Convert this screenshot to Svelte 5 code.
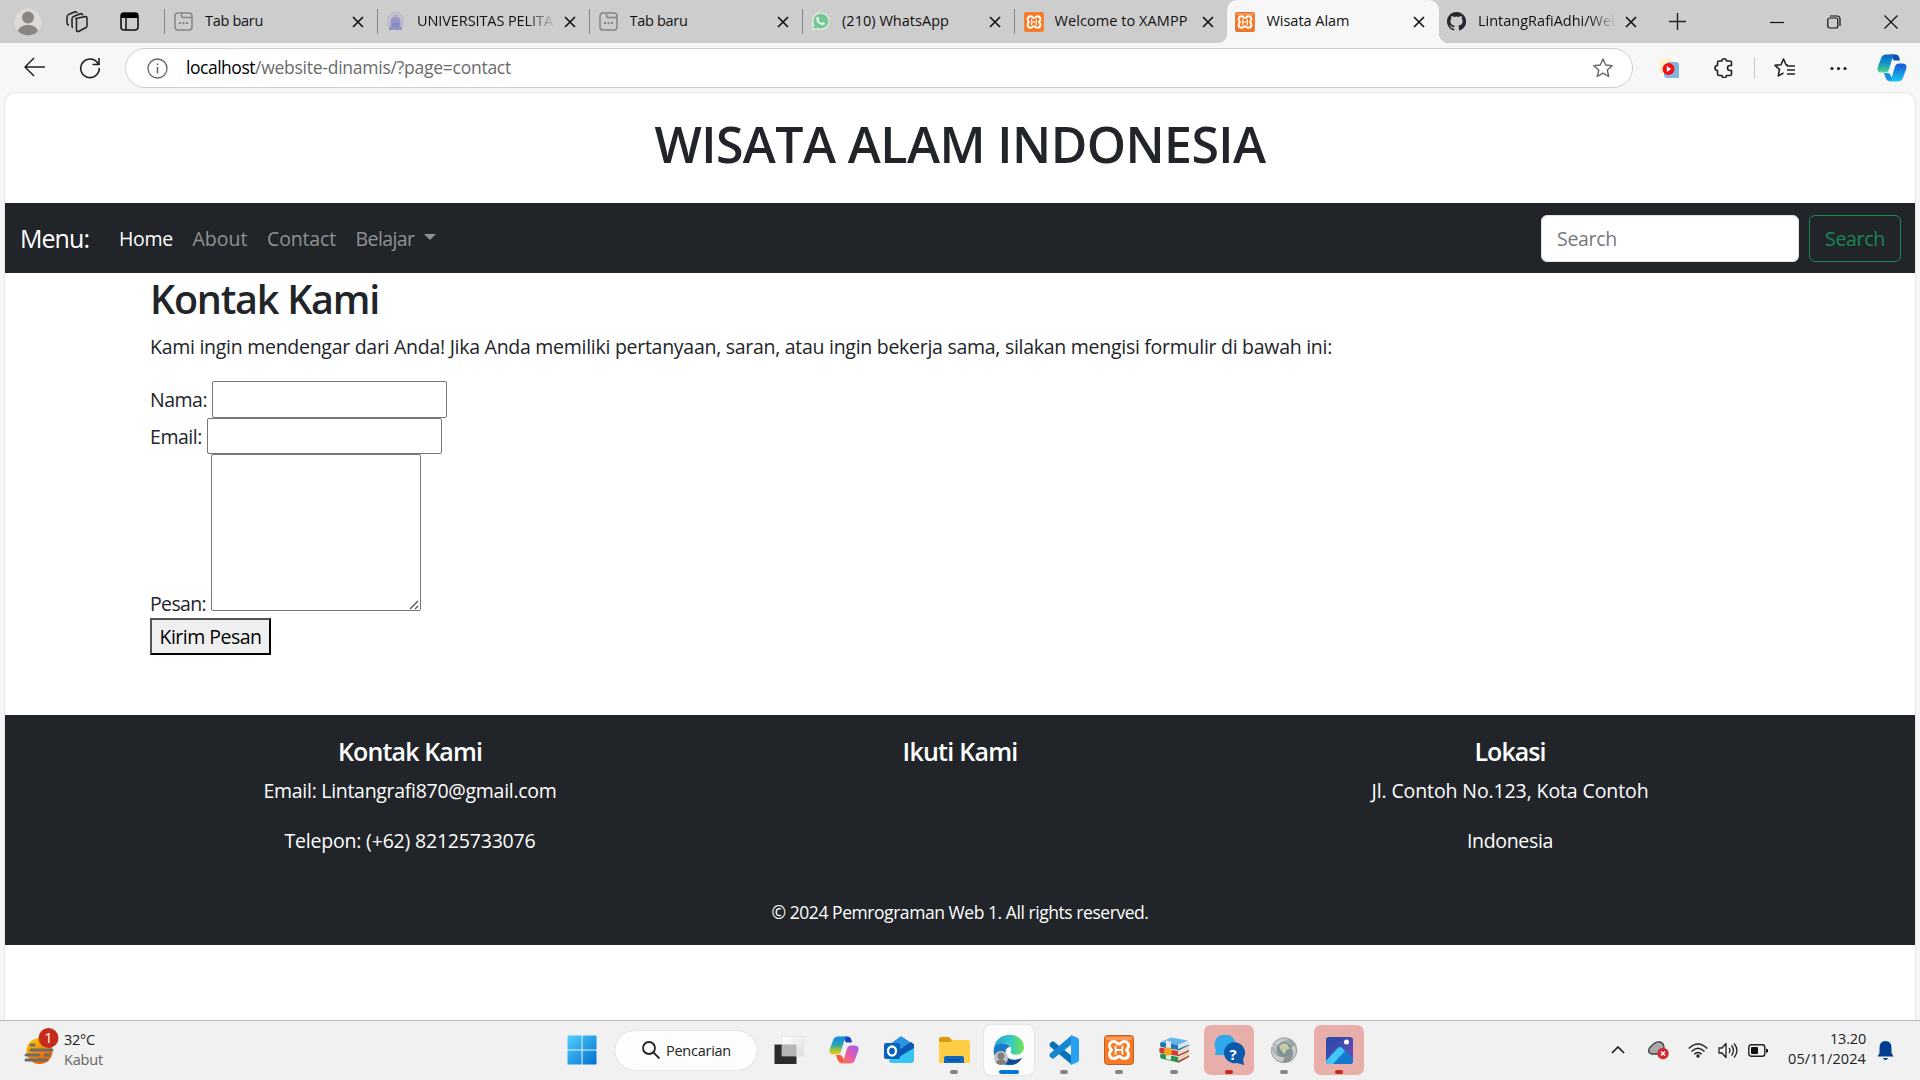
<script>
  // Adjusts letter spacing so that a label occupies the given width.
  function fit(node, width) {
    const natural = node.getBoundingClientRect().width;
    const count = node.textContent.length;
    node.style.letterSpacing = `${(width - natural) / count}px`;
  }

  const tabs = [
    { icon: 'new', title: 'Tab baru', width: 58 },
    { icon: 'uni', title: 'UNIVERSITAS PELITA', width: 136, fade: true },
    { icon: 'new', title: 'Tab baru', width: 58 },
    { icon: 'wa', title: '(210) WhatsApp', width: 107 },
    { icon: 'xampp', title: 'Welcome to XAMPP', width: 133 },
    { icon: 'xampp2', title: 'Wisata Alam', width: 83, active: true },
    { icon: 'github', title: 'LintangRafiAdhi/Web', width: 142, fade: true }
  ];

  const apps = [
    { icon: 'folder', run: 'idle' },
    { icon: 'edge', run: 'current' },
    { icon: 'code', run: 'idle' },
    { icon: 'xampp', run: 'idle' },
    { icon: 'books', run: 'idle' },
    { icon: 'help', run: 'alert' },
    { icon: 'globe', run: 'idle' },
    { icon: 'photos', run: 'alert' }
  ];
</script>

{#snippet xampp(size, bevel)}
  <svg width={size} height={size} viewBox="0 0 30 30">
    <rect x=".5" y=".5" width="29" height="29" rx="3" fill="#f97822" stroke={bevel ? '#b9612a' : '#f97822'} />
    {#if bevel}<path d="M2 2h26v3H2z" fill="#ffb37d" opacity=".6" />{/if}
    <path d="M10 6.500C6.500 6.500 5 9 5.500 11.500C5.800 13 6.800 14 7.500 15C6.500 16 5.500 17.200 5.500 19C5.500 22 7.500 23.500 10 23.500C12.500 23.500 13 21.500 15 21.500C17 21.500 17.500 23.500 20 23.500C22.500 23.500 24.500 22 24.500 19C24.500 17.200 23.500 16 22.500 15C23.200 14 24.200 13 24.500 11.500C25 9 23.500 6.500 20 6.500C17.500 6.500 17 9 15 9C13 9 12.500 6.500 10 6.500Z" fill="none" stroke="#fff" stroke-width="3" stroke-linejoin="round" />
    <path d="M11.500 11.500v2q0 1.500 1.500 1.500h4q1.500 0 1.500-1.500v-2M11.500 19v-2.500Q11.500 15 13 15M18.500 19v-2.500Q18.500 15 17 15" fill="none" stroke="#fff" stroke-width="1.800" stroke-linecap="round" />
  </svg>
{/snippet}

{#snippet closeIcon()}
  <svg class="close" width="12" height="12" viewBox="0 0 12 12"><path d="M1 1l10 10M11 1L1 11" stroke="#111" stroke-width="1.600" /></svg>
{/snippet}

<div class="screen">
  <header class="tabstrip">
    <div class="tools">
      <svg width="28" height="28" viewBox="0 0 28 28"><circle cx="14" cy="14" r="13.500" fill="#dcdad7" /><circle cx="14" cy="9.500" r="6" fill="#8a8683" /><path d="M4 23c2-8 18-8 20 0a13.500 13.500 0 0 1-20 0z" fill="#8a8683" /></svg>
      <svg width="22" height="22" viewBox="0 0 22 22" fill="none" stroke="#222" stroke-width="1.500" stroke-linejoin="round"><path d="M10 7.500l9.500-2q1.500 0 1.500 1.500v8q0 1-1 1.500l-7.500 4q-2 .5-2-1.500V9.500z" /><path d="M7 16.500q-1 0-1-2V8q0-2 1.500-2.500L15 2.500q1.500 0 1.500 2M3 14q-2 0-2-2V6q0-1.500 1.500-2.500L9 .8q2-.3 2 1.500" /></svg>
      <svg width="19" height="19" viewBox="0 0 19 19"><rect x="1" y="1" width="17" height="17" rx="3" fill="none" stroke="#111" stroke-width="1.600" /><path d="M1 6V3q0-2 2-2h13q2 0 2 2v3z" fill="#000" /><path d="M6 6v12" stroke="#111" stroke-width="1.500" /></svg>
    </div>
    <div class="tabs">
      {#each tabs as tab}
        <div class="tab" class:active={tab.active}>
          <span class="favicon">
            {#if tab.icon === 'new'}
              <svg width="19" height="19" viewBox="0 0 19 19" fill="none" stroke="#858585" stroke-width="1.500"><rect x="1" y="1" width="17" height="17" rx="3" /><path d="M7.500 1v3q0 1.500 1.500 1.500h9" /><path d="M5 11h2M8.500 11h2M12 11h2" stroke-width="2" /></svg>
            {:else if tab.icon === 'uni'}
              <svg width="19" height="19" viewBox="0 0 19 19"><path d="M2 9a7.500 8.500 0 0 1 15 0v5H2z" fill="#c3c4d4" stroke="#b3b5cc" /><path d="M9.500 4.500q4.500 0 5 5V15h1.500v3H3v-3h1.500V9.500q.5-5 5-5z" fill="#9496c6" /><path d="M7 15v-4M9.500 15v-5M12 15v-4" stroke="#7274b4" /><path d="M7 3.500h5M7 6.500l2.500-2 2.500 2" stroke="#dc9ba1" fill="none" /></svg>
            {:else if tab.icon === 'wa'}
              <svg width="19" height="19" viewBox="0 0 19 19"><path d="M.5 18.500l1.500-5a8.800 8.800 0 1 1 3.500 3.500z" fill="#e3eee6" /><path d="M2.300 16.700l1-4a7.500 7.500 0 1 1 3 3z" fill="#74c891" /><path d="M5.800 5.200q1-1 1.700.2l.7 1.500-.8 1.300q1 2.200 3.200 3l1.300-1.300 1.900 1q.5 2-1.800 2.300Q6.500 12.500 5.300 7.500q0-1.500.5-2.300z" fill="#eef6f0" /></svg>
            {:else if tab.icon === 'github'}
              <svg width="19" height="19" viewBox="0 0 16 16" fill="#24292f"><path d="M8 0C3.580 0 0 3.580 0 8c0 3.540 2.290 6.530 5.470 7.590.4.070.55-.17.55-.38v-1.340c-2.220.48-2.690-1.070-2.690-1.070-.36-.92-.89-1.170-.89-1.170-.73-.5.05-.49.05-.49.8.06 1.230.82 1.230.82.71 1.220 1.870.87 2.330.67.070-.52.280-.87.510-1.070-1.780-.2-3.640-.89-3.640-3.950 0-.87.310-1.590.82-2.150-.08-.2-.36-1.020.08-2.120 0 0 .67-.21 2.200.82a7.600 7.600 0 0 1 4 0c1.530-1.040 2.200-.82 2.200-.82.44 1.100.16 1.920.08 2.120.51.560.82 1.270.82 2.150 0 3.070-1.870 3.750-3.650 3.950.29.250.54.730.54 1.480v2.190c0 .21.150.46.55.38A8 8 0 0 0 8 0z" /></svg>
            {:else}
              {@render xampp(20, tab.active)}
            {/if}
          </span>
          <span class="title" class:fade={tab.fade}><span class="t" use:fit={tab.width}>{tab.title}</span></span>
          {@render closeIcon()}
        </div>
      {/each}
    </div>
    <svg class="plus" width="17" height="17" viewBox="0 0 17 17"><path d="M8.500 0v17M0 8.500h17" stroke="#222" stroke-width="1.400" /></svg>
    <div class="winctl">
      <svg width="14" height="14" viewBox="0 0 14 14"><path d="M0 7.500h14" stroke="#111" stroke-width="1.200" /></svg>
      <svg width="14" height="14" viewBox="0 0 14 14" fill="none" stroke="#111" stroke-width="1.200"><rect x=".8" y="3" width="10" height="10" rx="2" /><path d="M3 1h7q3 0 3 3v7" /></svg>
      <svg width="14" height="14" viewBox="0 0 14 14"><path d="M.5.5l13 13M13.500.5l-13 13" stroke="#111" stroke-width="1.200" /></svg>
    </div>
  </header>

  <div class="toolbar">
    <svg class="back" width="21" height="20" viewBox="0 0 21 20" fill="none" stroke="#222" stroke-width="1.500"><path d="M21 10H1M10 1l-9 9 9 9" /></svg>
    <svg class="reload" width="22" height="22" viewBox="0 0 22 22" fill="none" stroke="#222" stroke-width="1.600"><path d="M19.500 7.500A9.300 9.300 0 1 0 20.300 11M20 1v6.500h-6.500" /></svg>
    <div class="address">
      <svg width="21" height="21" viewBox="0 0 21 21" fill="none" stroke="#666" stroke-width="1.300"><circle cx="10.500" cy="10.500" r="9.500" /><path d="M10.500 9v6.500M10.500 5.500v1.700" stroke-width="1.600" /></svg>
      <span class="url"><span class="t host" use:fit={69}>localhost</span><span class="t" use:fit={256}>/website-dinamis/?page=contact</span></span>
      <svg class="star" width="20" height="20" viewBox="0 0 20 20" fill="none" stroke="#666" stroke-width="1.400" stroke-linejoin="round"><path d="M10 1l2.700 6 6.500.7-4.900 4.300 1.400 6.500L10 15.200l-5.700 3.300L5.700 12 .8 7.700l6.500-.7z" /></svg>
    </div>
    <div class="actions">
      <svg width="20" height="20" viewBox="0 0 20 20"><path d="M0 0h20v20H0z" fill="#fff" /><path d="M0 0h11q3 0 3 3v4H6v9H3q-3 0-3-3z" fill="#fff1ce" /><path d="M9 4h8q3 0 3 3v13H8q-3 0-3-3V8z" fill="#83b5dc" /><circle cx="9.500" cy="11" r="6" fill="#f50f18" /><path d="M7.800 8l4.500 3-4.500 3z" fill="#fff" /></svg>
      <svg width="20" height="20" viewBox="0 0 20 20" fill="none" stroke="#222" stroke-width="1.600" stroke-linejoin="round"><path d="M5 3h3a2.200 2.200 0 0 1 4.400 0H16q1.500 0 1.500 1.500V7.500H16a2.500 2.500 0 0 0 0 5h1.500V16q0 1.500-1.500 1.500h-3.600a2.200 2.200 0 0 1-4.400 0H5q-1.500 0-1.500-1.500v-3.500a2.500 2.500 0 0 1 0-5V4.500Q3.500 3 5 3z" /></svg>
      <i></i>
      <svg width="21" height="20" viewBox="0 0 21 20" fill="none" stroke="#222" stroke-width="1.600" stroke-linejoin="round"><path d="M14 7l-2-.3L9.500 1 7 6.700l-6 .7 4.500 4-1.200 6.500L9.500 15M12.500 8H21M13 12h8M13 16h8" /></svg>
      <svg width="17" height="5" viewBox="0 0 17 5" fill="#222"><circle cx="2" cy="2.500" r="1.600" /><circle cx="8.500" cy="2.500" r="1.600" /><circle cx="15" cy="2.500" r="1.600" /></svg>
      <svg width="30" height="28" viewBox="0 0 30 28"><defs><linearGradient id="cpa" x2="0" y2="1"><stop stop-color="#0967cc" /><stop offset=".5" stop-color="#1296c8" /><stop offset="1" stop-color="#55d783" /></linearGradient><linearGradient id="cpb" x2="0" y2="1"><stop stop-color="#1756d1" /><stop offset="1" stop-color="#18c8f5" /></linearGradient></defs><path d="M13 .500h6q3 0 4 6h-6z" fill="#0a4fb0" /><path d="M9.500 .500H18q-2 1-3 5l-3 10q-1 3-4 3H5q-6 0-4-6l3-8q1-4 5.500-4z" fill="url(#cpa)" /><path d="M20.500 27.500H12q2-1 3-5l3-10q1-3 4-3h3q6 0 4 6l-3 8q-1 4-5.500 4z" fill="url(#cpb)" /><path d="M7 19h4q2 0 3 3l1 3q-1 2-3 2-3 0-5-8z" fill="#1593e6" /></svg>
    </div>
  </div>

  <main class="page">
    <h1><span class="t" use:fit={611}>WISATA ALAM INDONESIA</span></h1>
    <nav>
      <span class="brand t" use:fit={69}>Menu:</span>
      <div class="links">
        <span class="t on" use:fit={54}>Home</span>
        <span class="t" use:fit={55}>About</span>
        <span class="t" use:fit={69}>Contact</span>
        <span class="drop"><span class="t" use:fit={59}>Belajar</span><b></b></span>
      </div>
      <div class="search">
        <div class="field"><span class="t" use:fit={60}>Search</span></div>
        <div class="go"><span class="t" use:fit={60}>Search</span></div>
      </div>
    </nav>

    <section class="contact">
      <h2><span class="t" use:fit={229}>Kontak Kami</span></h2>
      <p><span class="t" use:fit={1182}>Kami ingin mendengar dari Anda! Jika Anda memiliki pertanyaan, saran, atau ingin bekerja sama, silakan mengisi formulir di bawah ini:</span></p>
      <div class="row"><span class="t" use:fit={57}>Nama:</span><input type="text" aria-label="Nama" /></div>
      <div class="row"><span class="t" use:fit={52}>Email:</span><input type="text" aria-label="Email" /></div>
      <div class="row area">
        <span class="t" use:fit={56}>Pesan:</span>
        <div class="box">
          <textarea aria-label="Pesan"></textarea>
          <svg class="grip" width="10" height="10" viewBox="0 0 10 10"><path d="M1 9l8-8M6 9l3-3" stroke="#555" stroke-width="1.300" /></svg>
        </div>
      </div>
      <button><span class="t" use:fit={102}>Kirim Pesan</span></button>
    </section>

    <footer>
      <div class="cols">
        <div>
          <h5><span class="t" use:fit={144}>Kontak Kami</span></h5>
          <p><span class="t" use:fit={293}>Email: Lintangrafi870@gmail.com</span></p>
          <p><span class="t" use:fit={251}>Telepon: (+62) 82125733076</span></p>
        </div>
        <div>
          <h5><span class="t" use:fit={115}>Ikuti Kami</span></h5>
        </div>
        <div>
          <h5><span class="t" use:fit={71}>Lokasi</span></h5>
          <p><span class="t" use:fit={277}>Jl. Contoh No.123, Kota Contoh</span></p>
          <p><span class="t" use:fit={86}>Indonesia</span></p>
        </div>
      </div>
      <small><span class="t" use:fit={377}>© 2024 Pemrograman Web 1. All rights reserved.</span></small>
    </footer>
  </main>

  <div class="taskbar">
    <div class="weather">
      <svg width="36" height="38" viewBox="0 0 36 38"><defs><linearGradient id="sun" x2=".6" y2="1"><stop stop-color="#fdd106" /><stop offset="1" stop-color="#ea5a04" /></linearGradient></defs><circle cx="15.500" cy="23" r="13" fill="url(#sun)" /><path d="M7 17h3M7 22h21M2 27h13M21 27h4M2 32h21" stroke="#6d6c6b" stroke-width="3" stroke-linecap="round" /><circle cx="24.500" cy="10" r="10" fill="#c42b1c" /><text x="24.500" y="15" text-anchor="middle" font-size="14" fill="#fff">1</text></svg>
      <div class="wtext"><span class="t" use:fit={31}>32°C</span><span class="t dim" use:fit={39}>Kabut</span></div>
    </div>
    <div class="dock">
      <svg class="win" width="30" height="30" viewBox="0 0 30 30"><defs><linearGradient id="wg" x2="1" y2="1"><stop stop-color="#4fd0ff" /><stop offset="1" stop-color="#0070d1" /></linearGradient></defs><path d="M1 .5h13.500v14H.5V1zM15.500.5H29l.5.5v13.500h-14zM.5 15.500h14v14H1l-.5-.5zM15.500 15.500h14V29l-.5.5H15.500z" fill="url(#wg)" /></svg>
      <div class="find">
        <svg width="18" height="18" viewBox="0 0 18 18" fill="none" stroke="#222" stroke-width="1.800"><circle cx="7" cy="7" r="6" /><path d="M11.500 11.500l6 6" /></svg>
        <span class="t" use:fit={65}>Pencarian</span>
      </div>
      <div class="slot">
        <svg width="30" height="30" viewBox="0 0 30 30"><defs><linearGradient id="tv" x2="1" y2="1"><stop stop-color="#fff" /><stop offset="1" stop-color="#dedede" /></linearGradient></defs><path d="M.5 9.500h22v19.500H.5z" fill="#2b2b29" /><path d="M8 1.500h22v19.500H8z" fill="url(#tv)" stroke="#ddd" stroke-width=".6" /><path d="M8 9.500h14.500v11.500H8z" fill="#b5b5b5" /></svg>
      </div>
      <div class="slot">
        <svg width="30" height="28" viewBox="0 0 30 28"><defs><linearGradient id="ca" x2="0" y2="1"><stop stop-color="#1487e5" /><stop offset=".45" stop-color="#21a5b5" /><stop offset=".75" stop-color="#9fc83a" /><stop offset="1" stop-color="#f6c31b" /></linearGradient><linearGradient id="cb" x1="1" x2="0" y2="1"><stop stop-color="#9b5cf0" /><stop offset=".5" stop-color="#e55bb0" /><stop offset="1" stop-color="#ff7b3d" /></linearGradient></defs><path d="M14 .5h5q3 0 4 6h-6z" fill="#1846c4" /><path d="M9.500.5H18q-2 1-3 5l-3 10q-1 3-4 3H5q-6 0-4-6l3-8q1-4 5.500-4z" fill="url(#ca)" /><path d="M20.500 27.500H12q2-1 3-5l3-10q1-3 4-3h3q6 0 4 6l-3 8q-1 4-5.500 4z" fill="url(#cb)" /><path d="M7 19h4q2 0 3 3l1 3q-1 2-3 2-3 0-5-8z" fill="#f35b3f" /></svg>
      </div>
      <div class="slot">
        <svg width="31" height="28" viewBox="0 0 31 28"><path d="M5 9L16 1q1-.8 2 0l12 8v4l-13 8-12-7z" fill="#1267bd" /><path d="M7 8l9-7q1-.8 2 0l9 6-12 8z" fill="#2992e2" /><path d="M14 17l16-8v15q0 3-3 3H8q-3 0-3-3z" fill="#36c5f3" /><path d="M15 14l12-8 3 2.500V12l-15 9z" fill="#0a59ae" /><rect x="0" y="7" width="16" height="16" rx="2" fill="#0764bd" /><ellipse cx="8" cy="15" rx="4" ry="4.500" fill="none" stroke="#fff" stroke-width="2.300" /></svg>
      </div>
      {#each apps as app}
        <div class="slot {app.run}">
          {#if app.icon === 'folder'}
            <svg width="31" height="28" viewBox="0 0 31 28"><path d="M0 3q0-2 2-2h8l3 3v4H0z" fill="#dd9a0b" /><path d="M0 6h11l3-2h15q2 0 2 2v20q0 1-1 1H1q-1 0-1-1z" fill="#ffce45" /><path d="M5 27v-5q0-2 2-2h16q2 0 2 2v5z" fill="#0f68bc" /><path d="M9 24h12" stroke="#063e87" /></svg>
          {:else if app.icon === 'edge'}
            <svg width="32" height="32" viewBox="0 0 32 32"><defs><linearGradient id="ea" x2="1"><stop stop-color="#22a4dd" /><stop offset=".55" stop-color="#37c7c5" /><stop offset="1" stop-color="#74e64b" /></linearGradient></defs><path d="M1 15C2-3 30-4 31 13c0 7-7 9-12 7-3-2 0-3-1-6C16 8 6 7 1 15z" fill="url(#ea)" /><path d="M1 14c4-6 13-6 16-1-6 0-6 9 0 12 4 2 9 1 12-1-5 9-18 9-24 3-4-4-5-9-4-13z" fill="#187ac8" /><path d="M12 17c-2 6 4 12 17 7-4 6-9 8-15 6-6-3-7-10-2-13z" fill="#114b93" /><circle cx="8" cy="24" r="7" fill="#c4c4c4" /><circle cx="8" cy="22" r="3.500" fill="#817d7a" /><path d="M3 29c1-5 9-5 10 0q-5 4-10 0z" fill="#817d7a" /></svg>
          {:else if app.icon === 'code'}
            <svg width="30" height="30" viewBox="0 0 30 30"><path d="M1 8l3-2 19 15v9L1 11.500Q0 9.500 1 8z" fill="#0a70b8" /><path d="M1 22l3 2L23 9V0L1 18.500Q0 20.500 1 22z" fill="#1688d3" /><path d="M22 0l6.500 2.800Q30 3.500 30 5v20q0 1.500-1.500 2.200L22 30z" fill="#29a1f0" /></svg>
          {:else if app.icon === 'xampp'}
            {@render xampp(30, true)}
          {:else if app.icon === 'books'}
            <svg width="31" height="26" viewBox="0 0 31 26"><path d="M2 5L12 .500l17 3L19 8z" fill="#62b6ed" /><path d="M2 5l17 3v5L2 10q-2-2.500 0-5z" fill="#2375b5" /><path d="M19 8l10.500-4.500v4L19 13z" fill="#d9e6ee" /><path d="M19 12l11-4.500v1L19 14z" fill="#2375b5" /><path d="M1 10.500l18 3.500v5L1 16q-1.500-3 0-5.500z" fill="#d53a35" /><path d="M19 14l11-5v4.500L19 19z" fill="#f0dbc5" /><path d="M2 16.500l17 3.500v5.500L2 21.500q-2-2.500 0-5z" fill="#26964a" /><path d="M19 20l11-5.500v4.500l-11 6z" fill="#ead5bb" /><path d="M19 24l11-5.500v1.500l-11 6zM19 18l11-5v1.500l-11 5z" fill="#9c4538" /><path d="M7 3.500l5 1V23l-5-1z" fill="#e9e8f0" /><circle cx="9" cy="14.500" r="4" fill="#f5a51a" /></svg>
          {:else if app.icon === 'help'}
            <svg width="31" height="31" viewBox="0 0 31 31"><path d="M1 20l1-5A10.500 10.500 0 1 1 9 20z" fill="#2fa9e9" /><path d="M30 30l-1-6a10.500 10.500 0 1 0-6 4z" fill="#0d59ab" /><text x="19" y="24.500" text-anchor="middle" font-size="15" font-weight="700" fill="#fff">?</text></svg>
          {:else if app.icon === 'globe'}
            <svg width="28" height="28" viewBox="0 0 28 28"><defs><linearGradient id="gl" x2="1" y2="1"><stop stop-color="#e3e5e5" /><stop offset=".5" stop-color="#a4a8a9" /><stop offset="1" stop-color="#777c7d" /></linearGradient></defs><circle cx="14" cy="14" r="13" fill="url(#gl)" /><circle cx="14" cy="13.500" r="7.500" fill="#7d9296" /><path d="M9 10q4-4 8-2l3 5-4 1-1 4q-4-2-6-8z" fill="#c9caa9" /><path d="M3 8Q12-2 22 5.500 13 3 8 9.500 5 9 3 8zM25 8q5 13-7 18 8-7 3-14 2-3 4-4zM12 26.500Q-1 23 2 11q2 10 13 10-1 4-3 5.500z" fill="#c9cccc" stroke="#8b8f90" stroke-width=".6" /></svg>
          {:else}
            <svg width="27" height="27" viewBox="0 0 27 27"><defs><linearGradient id="ph" x2="1" y2="1"><stop stop-color="#214ca9" /><stop offset="1" stop-color="#7447b6" /></linearGradient><clipPath id="pc"><rect width="27" height="27" rx="3" /></clipPath></defs><g clip-path="url(#pc)"><path d="M0 0h27v27H0z" fill="url(#ph)" /><path d="M0 23l11-12q3-3 6 0l10 10v6H0z" fill="#1678cf" /><path d="M0 24l12-13q2-2 4 0l3 3L7 27H0z" fill="#42c6f4" /></g><circle cx="20.500" cy="5" r="2.500" fill="#fff" /></svg>
          {/if}
          <em></em>
        </div>
      {/each}
    </div>
    <div class="tray">
      <svg class="chev" width="14" height="8" viewBox="0 0 14 8" fill="none" stroke="#222" stroke-width="1.700"><path d="M1 7l6-6 6 6" /></svg>
      <svg class="cloud" width="21" height="19" viewBox="0 0 21 19"><path d="M4 13Q-1 12 1.500 7C4 5 6 0 12 1q4 1 4 6v6z" fill="#aaa" stroke="#444" stroke-width="1.400" /><circle cx="15" cy="12.500" r="5.700" fill="#dc2430" /><path d="M13 10.500l4 4m0-4l-4 4" stroke="#fff" stroke-width="1.500" /></svg>
      <svg class="wifi" width="20" height="15" viewBox="0 0 20 15" fill="none" stroke="#222" stroke-width="1.400"><path d="M.7 5.500q9.300-9 18.600 0M3.500 8.500q6.500-6.500 13 0M6.300 11.300q3.700-3.700 7.400 0" /><circle cx="10" cy="13" r="1" fill="#222" /></svg>
      <svg class="vol" width="20" height="17" viewBox="0 0 20 17" fill="none" stroke="#222" stroke-width="1.300" stroke-linejoin="round"><path d="M1 6h3l4-4.500v14L4 11H1zM11 6q2 2.500 0 5M13.500 3.500q4 5 0 10M16 1.500q6 7 0 14" /></svg>
      <svg class="bat" width="20" height="13" viewBox="0 0 20 13"><rect x=".8" y=".8" width="16" height="11.400" rx="2.500" fill="none" stroke="#222" stroke-width="1.400" /><rect x="3" y="3" width="7" height="7" rx="1" fill="#111" /><path d="M18 4.500l2 1v2.500l-2 1z" fill="#111" /></svg>
      <div class="clock"><span class="t" use:fit={36}>13.20</span><span class="t" use:fit={78}>05/11/2024</span></div>
      <svg width="17" height="19" viewBox="0 0 17 19" fill="#003e92"><path d="M2.500 7q0-7 6-7t6 7v5l2 3.500H.5l2-3.500zM6 17h5q-.5 2-2.500 2T6 17z" /></svg>
    </div>
  </div>
</div>

<style>
  :global(body) { margin: 0; overflow: hidden; }
  * { box-sizing: border-box; }
  .screen { width: 1920px; height: 1080px; display: flex; flex-direction: column; background: #f7f7f7; font-family: "Open Sans", "Noto Sans", sans-serif; color: #212529; overflow: hidden; }
  svg { display: block; flex: none; }
  .t { display: inline-block; white-space: pre; }

  .tabstrip { height: 43px; flex: none; background: #cdcdcd; display: flex; align-items: center; }
  .tools { width: 164px; padding-left: 14px; display: flex; align-items: center; gap: 25px; flex: none; }
  .tools svg:nth-child(2) { margin-left: -1px; }
  .tools svg:nth-child(3) { margin-left: 7px; }
  .tabs { display: flex; height: 43px; }
  .tab { width: 212.500px; height: 43px; display: flex; align-items: center; padding-left: 10px; position: relative; font-size: 14.500px; color: #111; }
  .tab::before { content: ''; position: absolute; left: 0; top: 9px; height: 25px; width: 1px; background: #858585; }
  .tab:nth-child(n+2) { padding-left: 9.500px; }
  .tab.active { background: #f7f7f7; border-radius: 10px 10px 0 0; padding-left: 8px; }
  .tab.active::before { left: -10px; right: -10px; top: auto; bottom: 0; width: auto; height: 10px; background: radial-gradient(circle at 0 0, transparent 10px, #f7f7f7 10.500px) left / 10px 10px no-repeat, radial-gradient(circle at 100% 0, transparent 10px, #f7f7f7 10.500px) right / 10px 10px no-repeat; }
  .tab.active + .tab::before { display: none; }
  .tab.active .favicon { width: 32px; }
  .tab.active .title { width: 140px; }
  .tab.active + .tab { padding-left: 8px; }
  .favicon { width: 31px; flex: none; }
  .title { width: 141px; overflow: hidden; padding-bottom: 2px; }
  .fade { mask-image: linear-gradient(90deg, #000 78%, transparent 98%); }
  .close { margin-left: 6px; }
  .plus { margin-left: 17px; margin-bottom: 1px; }
  .winctl { margin-left: auto; padding-right: 22px; display: flex; gap: 43px; }

  .toolbar { height: 50px; flex: none; display: flex; align-items: center; }
  .back { margin-left: 24px; margin-bottom: 2px; }
  .reload { margin-left: 34px; margin-bottom: 1px; }
  .address { margin-left: 24px; width: 1508px; height: 40px; border: 1px solid #cfcfcf; border-radius: 20px; background: #fff; display: flex; align-items: center; padding: 0 19px 0 21px; }
  .url { margin-left: 18px; font-size: 17.500px; color: #6b6b6b; display: flex; padding-bottom: 3px; }
  .host { color: #000; }
  .star { margin-left: auto; }
  .actions { display: flex; align-items: center; margin-left: 26px; }
  .actions svg:nth-child(2) { margin-left: 35px; }
  .actions i { width: 1px; height: 20px; background: #c8c8c8; margin: 0 19px 0 20px; }
  .actions svg:nth-child(5) { margin: 0 30px 0 35px; }

  .page { margin: 0 5px; flex: 1; background: #fff; border-radius: 10px 10px 0 0; box-shadow: 0 0 2px #bbb; display: flex; flex-direction: column; min-height: 0; }
  h1, h2, h5, p { margin: 0; font-weight: 600; }
  h1 { height: 110px; font-size: 50px; line-height: 102px; text-align: center; flex: none; }
  nav { height: 70px; flex: none; background: #212529; display: flex; align-items: center; padding: 0 14px 0 15px; color: #fff; font-size: 19.500px; }
  .brand { font-size: 25px; }
  .links { margin-left: 30px; display: flex; gap: 19.500px; color: #909294; }
  .on { color: #fff; }
  .drop { display: flex; align-items: center; gap: 9px; }
  .drop b { border: 6px solid transparent; border-top-color: #909294; border-bottom: 0; margin-bottom: 2px; }
  .search { margin-left: auto; display: flex; gap: 10px; }
  .field, .go { height: 47px; border-radius: 6px; display: flex; align-items: center; padding: 0 15px; }
  .field { width: 258px; background: #fff; border: 1px solid #dee2e6; color: #75797d; }
  .go { width: 92px; border: 1px solid #198754; color: #198754; }

  .contact { height: 442px; flex: none; padding: 2px 0 0 145px; display: flex; flex-direction: column; align-items: flex-start; font-size: 19.500px; }
  h2 { font-size: 39.500px; line-height: 48px; }
  .contact p { font-weight: 400; line-height: 30px; margin: 9px 0 19px; }
  .row { display: flex; align-items: center; gap: 5px; height: 36.700px; }
  input { width: 235px; height: 36.700px; padding: 0; border: 1px solid #767676; border-radius: 2px; background: #fff; }
  .area { height: 157px; align-items: flex-end; }
  .area .t { line-height: 30px; margin-bottom: -8px; }
  .box { position: relative; height: 157px; }
  textarea { display: block; width: 210px; height: 157px; padding: 0; border: 1px solid #767676; border-radius: 2px; background: #fff; resize: none; }
  .grip { position: absolute; right: 2px; bottom: 1px; }
  button { margin-top: 7px; width: 121px; height: 37px; padding: 0; border: 2px outset #000; background: #efefef; font: inherit; color: #000; line-height: 30px; }

  footer { height: 230px; flex: none; background: #212529; color: #fff; padding: 21px 130px 0; text-align: center; font-size: 19.500px; }
  .cols { display: grid; grid-template-columns: repeat(3, 550px); height: 161px; }
  h5 { font-size: 25px; line-height: 30px; margin-bottom: 10px; }
  .cols p { font-weight: 400; line-height: 30px; margin-bottom: 20px; }
  small { display: block; font-size: 17.500px; line-height: 30px; }

  .taskbar { height: 60px; flex: none; border-top: 1px solid #b9b9b9; background: #f1f1f1; display: grid; grid-template-columns: 558px 1fr 340px; align-items: center; font-size: 14.500px; color: #222; z-index: 1; }
  .weather { display: flex; padding-left: 24px; gap: 4px; align-items: center; }
  .weather svg { margin-bottom: 8px; }
  .wtext, .clock { display: flex; flex-direction: column; line-height: 20px; padding-bottom: 2px; }
  .wtext { align-items: flex-start; }
  .dim { color: #666; }
  .dock { display: flex; align-items: center; padding-left: 9px; padding-bottom: 1px; }
  .find { margin: 0 7px 0 18px; width: 142px; height: 39px; border-radius: 20px; background: #fdfdfd; box-shadow: 0 0 1px #aaa; display: flex; align-items: center; gap: 6px; padding-left: 27px; }
  .slot { width: 50px; height: 50px; margin-right: 5px; border-radius: 7px; display: flex; align-items: center; justify-content: center; position: relative; }
  .current { background: #fcfcfc; box-shadow: 0 0 2px #ccc; }
  .alert { background: #e8aeaa; }
  .slot em { position: absolute; bottom: 1px; left: 21px; width: 8px; height: 4px; border-radius: 2px; background: #858585; }
  .slot:nth-child(-n+5) em { display: none; }
  .current em { width: 20px; left: 15px; background: #0078d4; }
  .alert em { background: #c42b1c; }
  .tray { display: flex; align-items: center; padding: 0 0 1px 31px; }
  .cloud { margin-left: 23px; }
  .wifi { margin-left: 19px; }
  .vol { margin-left: 10px; }
  .bat { margin-left: 10px; }
  .clock { width: 98px; align-items: flex-end; margin-right: 11px; }
</style>
